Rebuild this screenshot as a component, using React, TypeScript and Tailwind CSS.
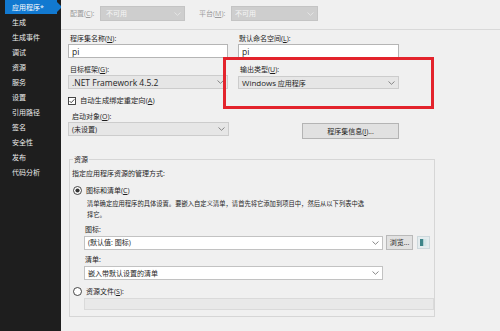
import React from "react";

function Chevron({ color = "#7a7a7a" }: { color?: string }) {
  return (
    <svg width="7" height="4" viewBox="0 0 7 4" className="shrink-0">
      <path d="M0.5 0.5 L3.5 3.3 L6.5 0.5" fill="none" stroke={color} strokeWidth="0.9" />
    </svg>
  );
}

function Radio({ checked }: { checked?: boolean }) {
  return (
    <svg width="9" height="9" viewBox="0 0 9 9" className="shrink-0">
      <circle cx="4.5" cy="4.5" r="4" fill="#ffffff" stroke="#333333" strokeWidth="0.9" />
      {checked && <circle cx="4.5" cy="4.5" r="2.1" fill="#333333" />}
    </svg>
  );
}

const items = [
  "生成",
  "生成事件",
  "调试",
  "资源",
  "服务",
  "设置",
  "引用路径",
  "签名",
  "安全性",
  "发布",
  "代码分析",
];

export default function App() {
  return (
    <div className="flex w-[500px] h-[331px] overflow-hidden font-['Open_Sans','Noto_Sans_CJK_SC',sans-serif] text-[7px] leading-[11px]">
      {/* Sidebar */}
      <aside className="w-[61px] h-full shrink-0 bg-[#1e1e1e] flex flex-col">
        <div className="relative h-[15px] flex items-start">
          <div className="ml-[5px] w-[52px] h-[14px] bg-[#1279d0] flex items-center pl-[7px] text-white">
            应用程序*
          </div>
          <svg className="absolute left-[57px] top-[2px]" width="5" height="10" viewBox="0 0 5 10">
            <path d="M0 0 L5 5 L0 10Z" fill="#1279d0" />
          </svg>
        </div>
        {items.map((t) => (
          <div key={t} className="h-[15px] flex items-center pl-[12px] text-[#ececec]">
            {t}
          </div>
        ))}
      </aside>

      {/* Main */}
      <main className="relative flex-1 h-full bg-[#f0f0f0] text-[#1e1e1e]">
        {/* Top toolbar */}
        <div className="h-[30px] border-b border-[#d9d9d9] flex items-start pt-[6px] pl-[9px]">
          <span className="w-[30px] h-[15px] flex items-center text-[#9b9b9b]">
            配置(<u>C</u>):
          </span>
          <div className="w-[85px] h-[15px] bg-[#cecece] border border-[#c4c4c4] flex items-center justify-between pl-[5px] pr-[3px] text-[#f6f6f6]">
            <span>不可用</span>
            <Chevron color="#e6e6e6" />
          </div>
          <span className="ml-[14px] w-[32px] h-[15px] flex items-center text-[#9b9b9b]">
            平台(<u>M</u>):
          </span>
          <div className="w-[87px] h-[15px] bg-[#cecece] border border-[#c4c4c4] flex items-center justify-between pl-[3px] pr-[3px] text-[#f6f6f6]">
            <span>不可用</span>
            <Chevron color="#e6e6e6" />
          </div>
        </div>

        {/* Body */}
        <div className="pl-[7px] flex flex-col">
          <div className="grid grid-cols-[160px_161px] gap-x-[10px]">
            <div className="mt-[3px] h-[11px] pl-[2px]">
              程序集名称(<u>N</u>):
            </div>
            <div className="mt-[3px] h-[11px] pl-[1px]">
              默认命名空间(<u>L</u>):
            </div>
            <div className="h-[14px] bg-white border border-[#b5b5b5] flex items-center pl-[3px] text-[8.5px]">pi</div>
            <div className="h-[14px] bg-white border border-[#b5b5b5] flex items-center pl-[3px] text-[8.5px]">pi</div>
            <div className="mt-[6px] h-[11px] pl-[2px]">
              目标框架(<u>G</u>):
            </div>
            <div className="mt-[6px] h-[11px] pl-[2px]">
              输出类型(<u>U</u>):
            </div>
            <div className="h-[14px] bg-[#e6e6e6] border border-[#cccccc] flex items-center justify-between pl-[3px] pr-[3px]">
              <span className="text-[8.5px]">.NET Framework 4.5.2</span>
              <Chevron />
            </div>
            <div className="mt-[1px] h-[13px] bg-[#e6e6e6] border border-[#cccccc] flex items-center justify-between pl-[3px] pr-[3px]">
              <span>
                <span className="text-[8px]">Windows</span> 应用程序
              </span>
              <Chevron />
            </div>
          </div>

          {/* Checkbox */}
          <div className="mt-[6px] h-[11px] flex items-center gap-[4px]">
            <svg width="8" height="8" viewBox="0 0 8 8" className="shrink-0">
              <rect x="0.5" y="0.5" width="7" height="7" fill="#ffffff" stroke="#333333" strokeWidth="0.9" />
              <path d="M1.6 4.1 L3.2 5.7 L6.4 2.3" fill="none" stroke="#333333" strokeWidth="0.9" />
            </svg>
            <span className="text-[7.3px]">
              自动生成绑定重定向(<u>A</u>)
            </span>
          </div>

          <div className="mt-[5px] h-[11px] pl-[4px]">
            启动对象(<u>O</u>):
          </div>
          <div className="flex items-start">
            <div className="w-[161px] h-[14px] bg-[#e6e6e6] border border-[#cccccc] flex items-center justify-between pl-[3px] pr-[3px]">
              <span>(未设置)</span>
              <Chevron />
            </div>
            <button className="ml-[73px] mt-[1px] w-[97px] h-[16px] bg-[#e1e1e1] border border-[#b4b4b4] flex items-center justify-center">
              程序集信息(<u>I</u>)...
            </button>
          </div>

          {/* Resources group */}
          <fieldset className="mt-[15px] ml-[1px] w-[366px] h-[163px] border border-[#d6d6d6] flex flex-col">
            <legend className="ml-[3px] px-[1px] leading-[11px]">资源</legend>
            <div className="mt-[3px] h-[11px] pl-[2px]">指定应用程序资源的管理方式:</div>
            <div className="mt-[6px] h-[11px] flex items-center pl-[3px] gap-[4px]">
              <Radio checked />
              <span>
                图标和清单(<u>C</u>)
              </span>
            </div>
            <div className="mt-[2px] pl-[17px] text-[6.3px] leading-[11px]">
              <div>清单确定应用程序的具体设置。要嵌入自定义清单，请首先将它添加到项目中，然后从以下列表中选</div>
              <div>择它。</div>
            </div>
            <div className="mt-[4px] h-[11px] pl-[15px]">图标:</div>
            <div className="h-[15px] flex items-center pl-[14px]">
              <div className="w-[299px] h-[14px] bg-white border border-[#c2c2c2] flex items-center justify-between pl-[3px] pr-[3px]">
                <span>(默认值: 图标)</span>
                <Chevron />
              </div>
              <button className="ml-[3px] w-[27px] h-[15px] bg-[#e1e1e1] border border-[#b9b9b9] flex items-center justify-center">
                浏览...
              </button>
              <svg className="ml-[4px]" width="13" height="13" viewBox="0 0 13 13">
                <rect x="0.5" y="0.5" width="12" height="12" fill="#e4ecee" stroke="#cdd8dc" />
                <rect x="3" y="3" width="3.5" height="7" fill="#3d8589" />
                <rect x="6.5" y="3" width="3" height="7" fill="#d3e6e8" />
              </svg>
            </div>
            <div className="mt-[4px] h-[11px] pl-[15px]">清单:</div>
            <div className="mt-[1px] pl-[14px]">
              <div className="w-[299px] h-[14px] bg-white border border-[#c2c2c2] flex items-center justify-between pl-[3px] pr-[3px]">
                <span>嵌入带默认设置的清单</span>
                <Chevron />
              </div>
            </div>
            <div className="mt-[6px] h-[11px] flex items-center pl-[3px] gap-[4px]">
              <Radio />
              <span>
                资源文件(<u>S</u>):
              </span>
            </div>
            <div className="mt-[1px] pl-[14px]">
              <div className="w-[350px] h-[12px] bg-[#e9e9e9] border border-[#dadada]" />
            </div>
          </fieldset>
        </div>

        {/* Red highlight annotation */}
        <div className="absolute left-[162px] top-[57px] w-[211px] h-[52px] border-[3px] border-[#e3232c]" />
      </main>
    </div>
  );
}
